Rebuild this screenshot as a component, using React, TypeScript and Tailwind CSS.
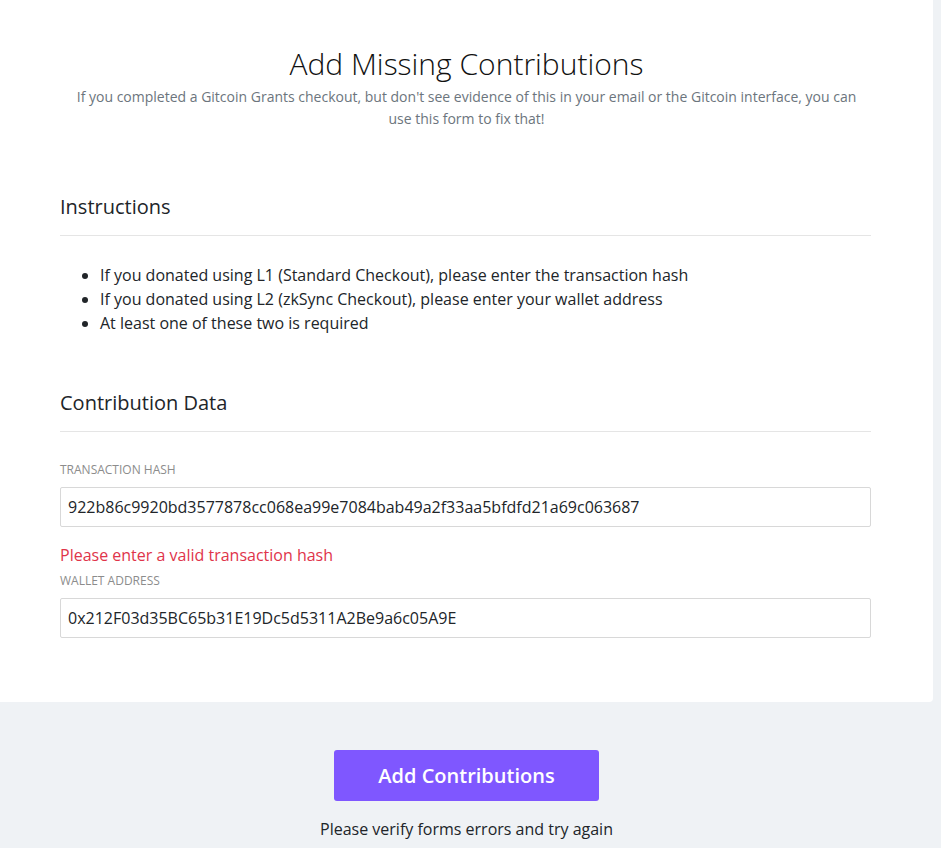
import React from 'react';

const font = { fontFamily: '"Open Sans", "Noto Sans", sans-serif' };

export default function App() {
  return (
    <div className="min-h-[848px] bg-[#eff2f5] text-[#212529]" style={font}>
      <div className="w-[933px] bg-white rounded-br-[4px] pt-[45px] pb-[64px]">
        <div className="text-center px-[68px]">
          <h1 className="text-[30px] leading-[38px] font-light text-[#111]">Add Missing Contributions</h1>
          <p className="mt-[3px] text-[14px] leading-[22px] text-[#6c757d]">
            If you completed a Gitcoin Grants checkout, but don't see evidence of this in your email or the Gitcoin interface, you can use this form to fix that!
          </p>
        </div>

        <div className="pl-[60px] pr-[62px] mt-[63px]">
          {/* Instructions */}
          <h3 className="text-[20px] leading-[28px] text-[#212529]">Instructions</h3>
          <hr className="mt-[14px] border-t border-[#e5e5e5]" />
          <ul className="list-disc pl-[40px] mt-[27px] text-[16px] leading-[24px]">
            <li>If you donated using L1 (Standard Checkout), please enter the transaction hash</li>
            <li>If you donated using L2 (zkSync Checkout), please enter your wallet address</li>
            <li>At least one of these two is required</li>
          </ul>

          {/* Contribution Data */}
          <h3 className="mt-[54px] text-[20px] leading-[28px] text-[#212529]">Contribution Data</h3>
          <hr className="mt-[14px] border-t border-[#e5e5e5]" />

          <label className="block mt-[29px] text-[12px] leading-[18px] uppercase text-[#8c8c8c]">Transaction Hash</label>
          <input
            className="block mt-[8px] w-full h-[40px] px-[7px] border border-[#d8d8d8] rounded-[2px] text-[16px] text-[#212529] outline-none"
            defaultValue="922b86c9920bd3577878cc068ea99e7084bab49a2f33aa5bfdfd21a69c063687"
          />
          <div className="mt-[16px] text-[16px] leading-[24px] text-[#e0344a]">Please enter a valid transaction hash</div>
          <label className="block mt-[5px] text-[12px] leading-[18px] uppercase text-[#8c8c8c]">Wallet Address</label>
          <input
            className="block mt-[8px] w-full h-[40px] px-[7px] border border-[#d8d8d8] rounded-[2px] text-[16px] text-[#212529] outline-none"
            defaultValue="0x212F03d35BC65b31E19Dc5d5311A2Be9a6c05A9E"
          />
        </div>
      </div>

      <div className="w-[933px] flex flex-col items-center pt-[48px]">
        <button className="w-[265px] h-[51px] rounded-[3px] bg-[#7f57ff] text-white text-[20px] font-semibold">Add Contributions</button>
        <p className="mt-[16px] text-[16px] leading-[24px] text-[#212529]">Please verify forms errors and try again</p>
      </div>
    </div>
  );
}
